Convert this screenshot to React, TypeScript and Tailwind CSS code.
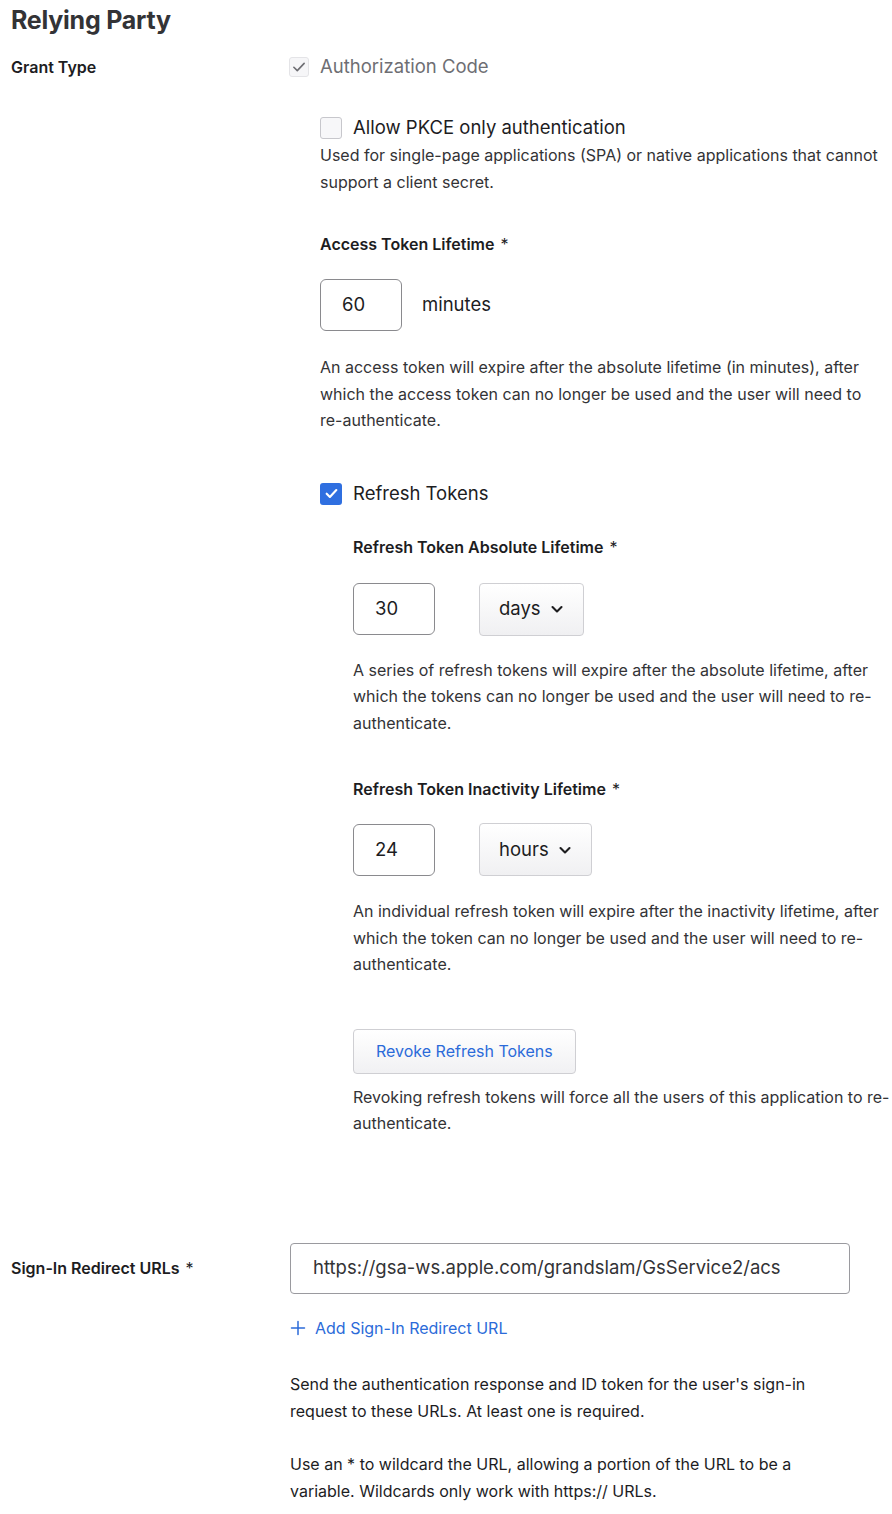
import React from 'react'

const FONT = { fontFamily: 'Inter, "Noto Sans", sans-serif' }

function Check({ color, width = 1.8, size = 14 }: { color: string; width?: number; size?: number }) {
  return (
    <svg width={size} height={size} viewBox="0 0 14 14" fill="none">
      <path d="M2.5 7.2l3 3 6-6.4" stroke={color} strokeWidth={width} strokeLinecap="round" strokeLinejoin="round" />
    </svg>
  )
}

function Chevron() {
  return (
    <svg width="14" height="14" viewBox="0 0 14 14" fill="none">
      <path d="M2.5 5l4.5 4.5 4.5-4.5" stroke="#1d1d1f" strokeWidth="2.1" strokeLinecap="round" strokeLinejoin="round" />
    </svg>
  )
}

function NumberBox({ value }: { value: string }) {
  return (
    <div className="w-[82px] h-[52px] rounded-[6px] border border-[#8a8a8e] bg-white flex items-center pl-[21px] text-[18.5px] text-[#1d1d1f]">
      {value}
    </div>
  )
}

function Select({ label }: { label: string }) {
  return (
    <div className="h-[53px] rounded-[4px] border border-[#cfcfd3] bg-gradient-to-b from-white to-[#f0f0f2] flex items-center gap-[9px] pl-[19px] pr-[19px] text-[18.5px] text-[#1d1d1f]">
      {label}
      <Chevron />
    </div>
  )
}

function Desc({ children, className = '' }: { children: React.ReactNode; className?: string }) {
  return <p className={`text-[16px] leading-[26.5px] text-[#333336] ${className}`}>{children}</p>
}

function FieldLabel({ children, className = '' }: { children: React.ReactNode; className?: string }) {
  return (
    <div className={`text-[16px] leading-[20px] font-semibold text-[#1d1d1f] ${className}`}>
      {children} <span className="font-normal ml-[2px]">*</span>
    </div>
  )
}

export default function App() {
  return (
    <div className="bg-white min-h-[1514px] pl-[11px] text-[#1d1d1f]" style={FONT}>
      <h1 className="pt-[4px] text-[25px] leading-[32px] font-bold text-[#333336] tracking-[-0.01em]">Relying Party</h1>

      {/* Grant type */}
      <div className="flex mt-[17px]">
        <div className="w-[278px] shrink-0 h-[28px] flex items-center text-[16px] font-semibold">Grant Type</div>
        <div className="flex-1">
          <div className="h-[28px] flex items-center gap-[11px]">
            <span className="w-[20px] h-[20px] rounded-[3px] border border-[#e4e4e7] bg-[#f6f6f8] flex items-center justify-center">
              <Check color="#6e6e73" width={1.4} size={16} />
            </span>
            <span className="text-[18.5px] text-[#6e6e73]">Authorization Code</span>
          </div>

          <div className="ml-[31px]">
            <div className="mt-[33px] h-[28px] flex items-center gap-[11px]">
              <span className="w-[22px] h-[22px] rounded-[3px] border border-[#c7c7cc] bg-[#f7f7f9]" />
              <span className="text-[18.5px]">Allow PKCE only authentication</span>
            </div>
            <Desc>Used for single-page applications (SPA) or native applications that cannot support a client secret.</Desc>

            <FieldLabel className="mt-[39px]">Access Token Lifetime</FieldLabel>
            <div className="mt-[25px] flex items-center gap-[20px]">
              <NumberBox value="60" />
              <span className="text-[18.5px]">minutes</span>
            </div>
            <Desc className="mt-[23px]">
              An access token will expire after the absolute lifetime (in minutes), after which the access token can no
              longer be used and the user will need to <span className="whitespace-nowrap">re-authenticate.</span>
            </Desc>

            <div className="mt-[46px] h-[28px] flex items-center gap-[11px]">
              <span className="w-[22px] h-[22px] rounded-[3px] bg-[#2f6fe0] flex items-center justify-center">
                <Check color="#ffffff" width={2} size={15} />
              </span>
              <span className="text-[18.5px]">Refresh Tokens</span>
            </div>

            <div className="ml-[33px]">
              <FieldLabel className="mt-[29px]">Refresh Token Absolute Lifetime</FieldLabel>
              <div className="mt-[26px] flex items-center gap-[44px]">
                <NumberBox value="30" />
                <Select label="days" />
              </div>
              <Desc className="mt-[21px]">
                A series of refresh tokens will expire after the absolute lifetime, after which the tokens can no longer
                be used and the user will need to re-authenticate.
              </Desc>

              <FieldLabel className="mt-[43px]">Refresh Token Inactivity Lifetime</FieldLabel>
              <div className="mt-[24px] flex items-center gap-[44px]">
                <NumberBox value="24" />
                <Select label="hours" />
              </div>
              <Desc className="mt-[22px]">
                An individual refresh token will expire after the inactivity lifetime, after which the token can no
                longer be used and the user will need to re-authenticate.
              </Desc>

              <button
                type="button"
                className="mt-[51px] h-[45px] px-[22px] rounded-[4px] border border-[#cfcfd3] bg-gradient-to-b from-white to-[#f1f1f3] text-[16px] text-[#2b6bd9]"
              >
                Revoke Refresh Tokens
              </button>
              <Desc className="mt-[10px]">
                Revoking refresh tokens will force all the users of this application to re-authenticate.
              </Desc>
            </div>
          </div>
        </div>
      </div>

      {/* Sign-in redirect */}
      <div className="flex mt-[106px]">
        <div className="w-[279px] shrink-0 h-[51px] flex items-center text-[16px] font-semibold">
          Sign-In Redirect URLs <span className="font-normal ml-[6px]">*</span>
        </div>
        <div className="flex-1">
          <div className="w-[560px] h-[51px] rounded-[4px] border border-[#9a9a9f] flex items-center pl-[22px] text-[18.5px] text-[#333336]">
            https://gsa-ws.apple.com/grandslam/GsService2/acs
          </div>
          <div className="mt-[22px] h-[24px] flex items-center gap-[9px] text-[16px] text-[#2b6bd9]">
            <svg width="16" height="16" viewBox="0 0 16 16" fill="none">
              <path d="M8 1.5v13M1.5 8h13" stroke="#2b6bd9" strokeWidth="1.5" strokeLinecap="round" />
            </svg>
            Add Sign-In Redirect URL
          </div>
          <div className="max-w-[540px] mt-[31px] text-[16px] leading-[27px] text-[#1d1d1f]">
            <p>Send the authentication response and ID token for the user's sign-in request to these URLs. At least one is required.</p>
            <p className="mt-[26px]">
              Use an * to wildcard the URL, allowing a portion of the URL to be a variable. Wildcards only work with
              https:// URLs.
            </p>
          </div>
        </div>
      </div>
    </div>
  )
}
